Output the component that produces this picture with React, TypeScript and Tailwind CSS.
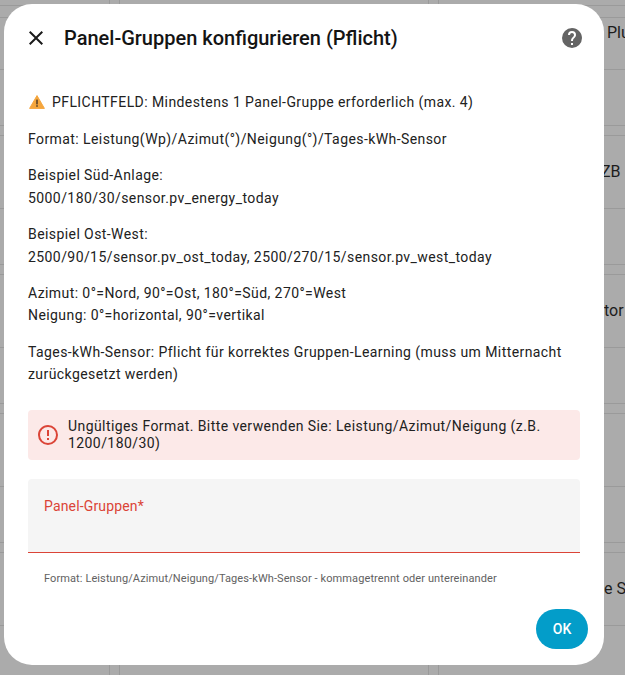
const rows = [
  { label: "Plu", indent: "pl-[168px]" },
  { label: "ZB", indent: "pl-[162px]" },
  { label: "tor", indent: "pl-[165px]" },
  { label: "", indent: "" },
  { label: "e S", indent: "pl-[165px]" },
];

function BackgroundCards() {
  return (
    <div className="ml-[-200px] mt-[-4px] grid w-[1000px] grid-cols-[310px_310px_310px] gap-[9px]">
      {rows.map((row, i) => (
        <div key={i} className="contents">
          <div className="h-[130px] border border-[#9a9a9a]">
            <div className="h-[73px] border-b border-[#9a9a9a]" />
          </div>
          <div className="h-[130px] border border-[#9a9a9a]">
            <div className="h-[73px] border-b border-[#9a9a9a]" />
          </div>
          <div className="h-[130px] border border-[#9a9a9a]">
            <div className={`flex h-[73px] items-center border-b border-[#9a9a9a] text-[16px] text-[#1c1c1c] ${row.indent}`}>
              {row.label}
            </div>
          </div>
        </div>
      ))}
    </div>
  );
}

function WarningIcon() {
  return (
    <svg viewBox="0 0 16 16" className="mr-[7px] ml-[1px] inline-block h-[16px] w-[16px] align-[-3px]">
      <path d="M8 1.6 15.4 14.4H.6Z" fill="#f5a63d" stroke="#f5a63d" strokeLinejoin="round" />
      <rect x="7.2" y="5.6" width="1.6" height="4.8" fill="#5c4326" />
      <rect x="7.2" y="11.2" width="1.6" height="1.6" fill="#5c4326" />
    </svg>
  );
}

export default function App() {
  return (
    <div className="relative h-[675px] w-[625px] overflow-hidden bg-[#ababab] font-['Roboto',sans-serif]">
      <BackgroundCards />
      <div className="absolute left-0 right-0 top-[5px] h-[13px] border-y border-[#9a9a9a]" />
      <div className="absolute left-[4px] top-[4px] flex h-[661px] w-[600px] flex-col rounded-[28px] bg-white">
        <div className="flex h-[68px] items-center px-[20px]">
          <svg viewBox="0 0 24 24" className="h-[24px] w-[24px]" fill="#1a1a1a">
            <path d="M19,6.41L17.59,5L12,10.59L6.41,5L5,6.41L10.59,12L5,17.59L6.41,19L12,13.41L17.59,19L19,17.59L13.41,12L19,6.41Z" />
          </svg>
          <h2 className="ml-[16px] flex-1 text-[20px] font-medium text-[#141414]">
            Panel-Gruppen konfigurieren (Pflicht)
          </h2>
          <svg viewBox="0 0 24 24" className="h-[24px] w-[24px]" fill="#646464">
            <path d="M15.07,11.25L14.17,12.17C13.45,12.89 13,13.5 13,15H11V14.5C11,13.39 11.45,12.39 12.17,11.67L13.41,10.41C13.78,10.05 14,9.55 14,9C14,7.89 13.1,7 12,7A2,2 0 0,0 10,9H8A4,4 0 0,1 12,5A4,4 0 0,1 16,9C16,9.88 15.64,10.67 15.07,11.25M13,19H11V17H13M12,2A10,10 0 0,0 2,12A10,10 0 0,0 12,22A10,10 0 0,0 22,12C22,6.47 17.5,2 12,2Z" />
          </svg>
        </div>
        <div className="flex-1 px-[24px] pt-[18.6px] text-[14px] leading-[22.4px] tracking-[0.42px] text-[#212121]">
          <p className="mb-[15px]">
            <WarningIcon />
            PFLICHTFELD: Mindestens 1 Panel-Gruppe erforderlich (max. 4)
          </p>
          <p className="mb-[14px]">Format: Leistung(Wp)/Azimut(°)/Neigung(°)/Tages-kWh-Sensor</p>
          <p className="mb-[14px]">
            Beispiel Süd-Anlage:
            <br />
            5000/180/30/sensor.pv_energy_today
          </p>
          <p className="mb-[14px]">
            Beispiel Ost-West:
            <br />
            2500/90/15/sensor.pv_ost_today, 2500/270/15/sensor.pv_west_today
          </p>
          <p className="mb-[14px]">
            Azimut: 0°=Nord, 90°=Ost, 180°=Süd, 270°=West
            <br />
            Neigung: 0°=horizontal, 90°=vertikal
          </p>
          <p>Tages-kWh-Sensor: Pflicht für korrektes Gruppen-Learning (muss um Mitternacht zurückgesetzt werden)</p>
          <div className="mt-[24.4px] flex h-[50px] items-center rounded-[4px] bg-[#fce9e8] pl-[8px] pr-[16px] leading-[17.5px]">
            <svg viewBox="0 0 24 24" className="mr-[8px] h-[24px] w-[24px] shrink-0" fill="#db4437">
              <path d="M11,15H13V17H11V15M11,7H13V13H11V7M12,2C6.47,2 2,6.5 2,12A10,10 0 0,0 12,22A10,10 0 0,0 22,12A10,10 0 0,0 12,2M12,20A8,8 0 0,1 4,12A8,8 0 0,1 12,4A8,8 0 0,1 20,12A8,8 0 0,1 12,20Z" />
            </svg>
            <span>Ungültiges Format. Bitte verwenden Sie: Leistung/Azimut/Neigung (z.B. 1200/180/30)</span>
          </div>
          <div className="mt-[19px] h-[74px] rounded-t-[4px] border-b border-[#db4437] bg-[#f5f5f5] px-[16px] pt-[16px] tracking-[0.15px] text-[#db4437]">
            Panel-Gruppen*
          </div>
          <p className="mt-[17px] px-[16px] text-[11px] leading-[17px] tracking-[0.1px] text-[#616161]">
            Format: Leistung/Azimut/Neigung/Tages-kWh-Sensor - kommagetrennt oder untereinander
          </p>
        </div>
        <div className="flex justify-end px-[16px] pb-[16px]">
          <button className="h-[40px] w-[52px] rounded-[20px] bg-[#039dc9] text-[14px] font-medium text-white">
            OK
          </button>
        </div>
      </div>
    </div>
  );
}
